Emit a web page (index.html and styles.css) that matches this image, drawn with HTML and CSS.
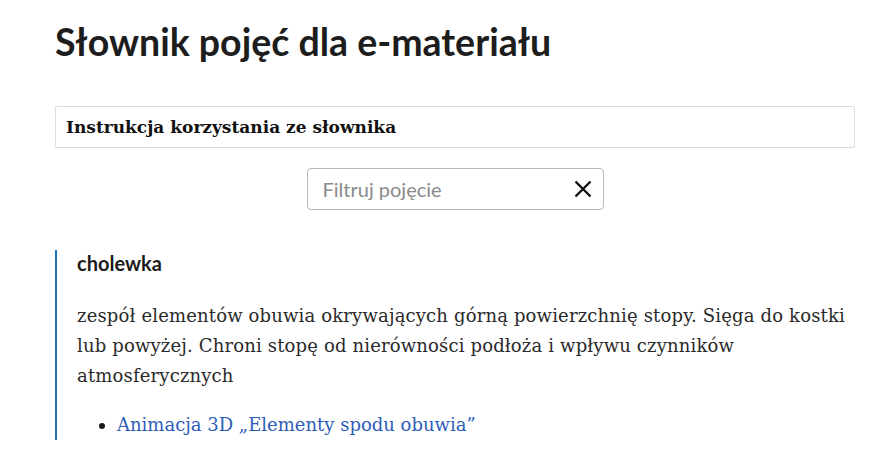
FILE: index.html
```html
<!DOCTYPE html>
<html lang="pl">
<head>
<meta charset="utf-8">
<link rel="stylesheet" href="styles.css">
</head>
<body>
<main class="page">
  <h1 class="title">Słownik pojęć dla e-materiału</h1>
  <div class="instr">Instrukcja korzystania ze słownika</div>
  <div class="filter-row">
    <div class="filter">
      <span class="placeholder">Filtruj pojęcie</span>
      <svg class="clear" width="20" height="20" viewBox="0 0 20 20"><path d="M2.5 2.5 L17.5 17.5 M17.5 2.5 L2.5 17.5" stroke="#111" stroke-width="2.4" fill="none"/></svg>
    </div>
  </div>
  <section class="entry">
    <h2 class="term">cholewka</h2>
    <p class="def">zespół elementów obuwia okrywających górną powierzchnię stopy. Sięga do kostki lub powyżej. Chroni stopę od nierówności podłoża i wpływu czynników atmosferycznych</p>
    <ul class="links">
      <li><a href="#">Animacja 3D „Elementy spodu obuwia”</a></li>
    </ul>
  </section>
</main>
</body>
</html>
```
FILE: styles.css
```css
html, body { margin: 0; padding: 0; background: #fff; }
body { color: #1b1b1b; }
.page { width: 800px; margin: 0 0 0 55px; padding-top: 20px; }
.title {
  font-family: Lato, sans-serif; font-weight: 700; font-size: 37.5px;
  margin: 0; line-height: 44px; color: #1d1d1d;
}
.instr {
  margin-top: 42px; border: 1px solid #dcdcdc; border-radius: 2px;
  height: 42px; box-sizing: border-box; padding: 0 10px;
  display: flex; align-items: center;
  font-family: "DejaVu Serif", serif; font-weight: 700; font-size: 17px; color: #111;
}
.filter-row { display: flex; justify-content: center; margin-top: 20px; }
.filter {
  width: 297px; height: 42px; box-sizing: border-box;
  border: 1px solid #b8b8b8; border-radius: 4px;
  display: flex; align-items: center; justify-content: space-between;
  padding: 0 10px 0 15px;
}
.placeholder { font-family: Lato, sans-serif; font-size: 20px; color: #8a8a8a; }
.entry {
  margin-top: 40px; border-left: 2px solid #1c74b8;
  padding: 1px 0 0 20px;
}
.term { font-family: Lato, sans-serif; font-weight: 700; font-size: 20px; margin: 0; line-height: 24px; color: #1b1b1b; }
.def {
  font-family: "DejaVu Serif", serif; font-size: 18px; line-height: 30px;
  letter-spacing: 0.16px;
  margin: 26px 0 0; color: #2a2a2a;
}
.links { margin: 19px 0 0; padding-left: 40px; font-family: "DejaVu Serif", serif; font-size: 18px; line-height: 30px; }
.links a { color: #2e5db8; text-decoration: none; }
```
